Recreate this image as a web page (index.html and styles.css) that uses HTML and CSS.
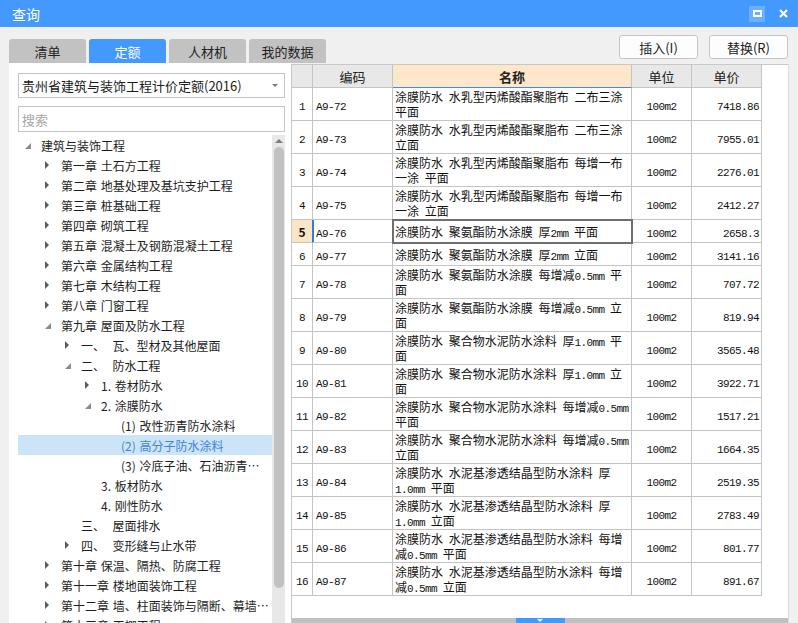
FILE: index.html
```html
<!DOCTYPE html>
<html lang="zh-CN">
<head>
<meta charset="utf-8">
<title>查询</title>
<link rel="stylesheet" href="styles.css">
</head>
<body>
<div class="titlebar">
  <span class="title">查询</span>
  <div class="win-btns">
    <span class="btn-max"><span class="max-box"></span></span>
    <svg class="btn-close" width="9" height="9" viewBox="0 0 9 9"><path d="M1 1L8 8M8 1L1 8" stroke="#fff" stroke-width="2.2"/></svg>
  </div>
</div>

<div class="toolbar">
  <div class="tabs">
    <div class="tab">清单</div>
    <div class="tab active">定额</div>
    <div class="tab">人材机</div>
    <div class="tab">我的数据</div>
  </div>
  <div class="actions">
    <button class="btn">插入(I)</button>
    <button class="btn">替换(R)</button>
  </div>
</div>

<div class="content">
  <div class="left">
    <div class="combo"><span class="combo-text">贵州省建筑与装饰工程计价定额(2016)</span><span class="combo-arrow"></span></div>
    <div class="search">搜索</div>
    <div class="tree">
      <div class="tree-list">
        <div class="node l0"><span class="tw"><i class="exp"></i></span><span class="label">建筑与装饰工程</span></div>
        <div class="node l1"><span class="tw"><i class="col"></i></span><span class="label">第一章 土石方工程</span></div>
        <div class="node l1"><span class="tw"><i class="col"></i></span><span class="label">第二章 地基处理及基坑支护工程</span></div>
        <div class="node l1"><span class="tw"><i class="col"></i></span><span class="label">第三章 桩基础工程</span></div>
        <div class="node l1"><span class="tw"><i class="col"></i></span><span class="label">第四章 砌筑工程</span></div>
        <div class="node l1"><span class="tw"><i class="col"></i></span><span class="label">第五章 混凝土及钢筋混凝土工程</span></div>
        <div class="node l1"><span class="tw"><i class="col"></i></span><span class="label">第六章 金属结构工程</span></div>
        <div class="node l1"><span class="tw"><i class="col"></i></span><span class="label">第七章 木结构工程</span></div>
        <div class="node l1"><span class="tw"><i class="col"></i></span><span class="label">第八章 门窗工程</span></div>
        <div class="node l1"><span class="tw"><i class="exp"></i></span><span class="label">第九章 屋面及防水工程</span></div>
        <div class="node l2"><span class="tw"><i class="col"></i></span><span class="label">一、&nbsp; 瓦、型材及其他屋面</span></div>
        <div class="node l2"><span class="tw"><i class="exp"></i></span><span class="label">二、&nbsp; 防水工程</span></div>
        <div class="node l3"><span class="tw"><i class="col"></i></span><span class="label">1. 卷材防水</span></div>
        <div class="node l3"><span class="tw"><i class="exp"></i></span><span class="label">2. 涂膜防水</span></div>
        <div class="node l4"><span class="tw"></span><span class="label">(1) 改性沥青防水涂料</span></div>
        <div class="node l4 sel"><span class="tw"></span><span class="label">(2) 高分子防水涂料</span></div>
        <div class="node l4"><span class="tw"></span><span class="label">(3) 冷底子油、石油沥青防水涂料</span></div>
        <div class="node l3"><span class="tw"></span><span class="label">3. 板材防水</span></div>
        <div class="node l3"><span class="tw"></span><span class="label">4. 刚性防水</span></div>
        <div class="node l2"><span class="tw"></span><span class="label">三、&nbsp; 屋面排水</span></div>
        <div class="node l2"><span class="tw"><i class="col"></i></span><span class="label">四、&nbsp; 变形缝与止水带</span></div>
        <div class="node l1"><span class="tw"><i class="col"></i></span><span class="label">第十章 保温、隔热、防腐工程</span></div>
        <div class="node l1"><span class="tw"><i class="col"></i></span><span class="label">第十一章 楼地面装饰工程</span></div>
        <div class="node l1"><span class="tw"><i class="col"></i></span><span class="label">第十二章 墙、柱面装饰与隔断、幕墙工程</span></div>
        <div class="node l1"><span class="tw"><i class="col"></i></span><span class="label">第十三章 天棚工程</span></div>
      </div>
      <div class="vscroll">
        <span class="up"></span>
        <span class="thumb"></span>
      </div>
    </div>
  </div>

  <div class="right">
    <div class="grid-wrap">
      <table class="grid">
        <colgroup>
          <col class="c-no"><col class="c-code"><col class="c-name"><col class="c-unit"><col class="c-price">
        </colgroup>
        <thead>
          <tr><th class="hd"></th><th class="hd">编码</th><th class="hd hd-name">名称</th><th class="hd">单位</th><th class="hd">单价</th></tr>
        </thead>
        <tbody>
          <tr class="two"><td class="no"><span class="n">1</span></td><td class="code"><span class="n">A9-72</span></td><td class="name">涂膜防水 水乳型丙烯酸酯聚脂布 二布三涂<br>平面</td><td class="unit"><span class="n">100m2</span></td><td class="price"><span class="n">7418.86</span></td></tr>
          <tr class="two"><td class="no"><span class="n">2</span></td><td class="code"><span class="n">A9-73</span></td><td class="name">涂膜防水 水乳型丙烯酸酯聚脂布 二布三涂<br>立面</td><td class="unit"><span class="n">100m2</span></td><td class="price"><span class="n">7955.01</span></td></tr>
          <tr class="two"><td class="no"><span class="n">3</span></td><td class="code"><span class="n">A9-74</span></td><td class="name">涂膜防水 水乳型丙烯酸酯聚脂布 每增一布<br>一涂 平面</td><td class="unit"><span class="n">100m2</span></td><td class="price"><span class="n">2276.01</span></td></tr>
          <tr class="two"><td class="no"><span class="n">4</span></td><td class="code"><span class="n">A9-75</span></td><td class="name">涂膜防水 水乳型丙烯酸酯聚脂布 每增一布<br>一涂 立面</td><td class="unit"><span class="n">100m2</span></td><td class="price"><span class="n">2412.27</span></td></tr>
          <tr class="one cur"><td class="no"><b>5</b></td><td class="code"><span class="n">A9-76</span></td><td class="name selcell">涂膜防水 聚氨酯防水涂膜 厚<span class="n">2mm</span> 平面</td><td class="unit"><span class="n">100m2</span></td><td class="price"><span class="n">2658.3</span></td></tr>
          <tr class="one"><td class="no"><span class="n">6</span></td><td class="code"><span class="n">A9-77</span></td><td class="name">涂膜防水 聚氨酯防水涂膜 厚<span class="n">2mm</span> 立面</td><td class="unit"><span class="n">100m2</span></td><td class="price"><span class="n">3141.16</span></td></tr>
          <tr class="two"><td class="no"><span class="n">7</span></td><td class="code"><span class="n">A9-78</span></td><td class="name">涂膜防水 聚氨酯防水涂膜 每增减<span class="n">0.5mm</span> 平<br>面</td><td class="unit"><span class="n">100m2</span></td><td class="price"><span class="n">707.72</span></td></tr>
          <tr class="two"><td class="no"><span class="n">8</span></td><td class="code"><span class="n">A9-79</span></td><td class="name">涂膜防水 聚氨酯防水涂膜 每增减<span class="n">0.5mm</span> 立<br>面</td><td class="unit"><span class="n">100m2</span></td><td class="price"><span class="n">819.94</span></td></tr>
          <tr class="two"><td class="no"><span class="n">9</span></td><td class="code"><span class="n">A9-80</span></td><td class="name">涂膜防水 聚合物水泥防水涂料 厚<span class="n">1.0mm</span> 平<br>面</td><td class="unit"><span class="n">100m2</span></td><td class="price"><span class="n">3565.48</span></td></tr>
          <tr class="two"><td class="no"><span class="n">10</span></td><td class="code"><span class="n">A9-81</span></td><td class="name">涂膜防水 聚合物水泥防水涂料 厚<span class="n">1.0mm</span> 立<br>面</td><td class="unit"><span class="n">100m2</span></td><td class="price"><span class="n">3922.71</span></td></tr>
          <tr class="two"><td class="no"><span class="n">11</span></td><td class="code"><span class="n">A9-82</span></td><td class="name">涂膜防水 聚合物水泥防水涂料 每增减<span class="n">0.5mm</span><br>平面</td><td class="unit"><span class="n">100m2</span></td><td class="price"><span class="n">1517.21</span></td></tr>
          <tr class="two"><td class="no"><span class="n">12</span></td><td class="code"><span class="n">A9-83</span></td><td class="name">涂膜防水 聚合物水泥防水涂料 每增减<span class="n">0.5mm</span><br>立面</td><td class="unit"><span class="n">100m2</span></td><td class="price"><span class="n">1664.35</span></td></tr>
          <tr class="two"><td class="no"><span class="n">13</span></td><td class="code"><span class="n">A9-84</span></td><td class="name">涂膜防水 水泥基渗透结晶型防水涂料 厚<br><span class="n">1.0mm</span> 平面</td><td class="unit"><span class="n">100m2</span></td><td class="price"><span class="n">2519.35</span></td></tr>
          <tr class="two"><td class="no"><span class="n">14</span></td><td class="code"><span class="n">A9-85</span></td><td class="name">涂膜防水 水泥基渗透结晶型防水涂料 厚<br><span class="n">1.0mm</span> 立面</td><td class="unit"><span class="n">100m2</span></td><td class="price"><span class="n">2783.49</span></td></tr>
          <tr class="two"><td class="no"><span class="n">15</span></td><td class="code"><span class="n">A9-86</span></td><td class="name">涂膜防水 水泥基渗透结晶型防水涂料 每增<br>减<span class="n">0.5mm</span> 平面</td><td class="unit"><span class="n">100m2</span></td><td class="price"><span class="n">801.77</span></td></tr>
          <tr class="two"><td class="no"><span class="n">16</span></td><td class="code"><span class="n">A9-87</span></td><td class="name">涂膜防水 水泥基渗透结晶型防水涂料 每增<br>减<span class="n">0.5mm</span> 立面</td><td class="unit"><span class="n">100m2</span></td><td class="price"><span class="n">891.67</span></td></tr>
        </tbody>
      </table>
    </div>
    <div class="hbar"><span class="handle"><i class="down"></i></span></div>
  </div>
</div>
</body>
</html>
```

FILE: styles.css
```css
* { box-sizing: border-box; }

body {
  margin: 0;
  width: 798px;
  height: 623px;
  overflow: hidden;
  background: #f0f0f0;
  font-family: "Noto Sans CJK SC", "Microsoft YaHei", sans-serif;
  font-size: 12px;
  color: #1f1f1f;
}

/* title bar */
.titlebar {
  height: 27px;
  background: #4499ff;
  color: #fff;
  font-size: 14px;
  display: flex;
  align-items: center;
  padding: 0 10px 0 12px;
}
.titlebar .title { flex: 1; }
.win-btns { display: flex; align-items: center; gap: 14px; }
.btn-max {
  width: 16px;
  height: 16px;
  background: #6caeff;
  display: flex;
  align-items: center;
  justify-content: center;
}
.max-box {
  width: 9px;
  height: 7px;
  border: 2px solid #fff;
}
.btn-close { display: block; }

/* toolbar */
.toolbar {
  height: 36px;
  display: flex;
  justify-content: space-between;
  align-items: flex-start;
  padding: 0 10px 0 9px;
}
.tabs { display: flex; gap: 3px; margin-top: 12px; }
.tab {
  width: 77px;
  height: 24px;
  background: #c2c2c2;
  border-radius: 3px 3px 0 0;
  display: flex;
  align-items: center;
  justify-content: center;
  font-size: 13px;
  color: #222;
}
.tab.active { background: #4499ff; color: #fff; }
.actions { display: flex; gap: 11px; margin-top: 8px; }
.btn {
  width: 79px;
  height: 24px;
  background: #fdfdfd;
  border: 1px solid #c6c6c6;
  border-radius: 3px;
  font-family: inherit;
  font-size: 13px;
  color: #222;
  padding: 0;
}

/* content */
.content {
  height: 560px;
  display: flex;
  padding: 0 9px;
}
.left {
  width: 282px;
  background: #fff;
  display: flex;
  flex-direction: column;
  padding-left: 9px;
}
.combo {
  margin-top: 10px;
  width: 267px;
  height: 25px;
  border: 1px solid #c4c4c4;
  display: flex;
  align-items: center;
  padding-left: 3px;
  font-size: 13px;
  color: #1a1a1a;
}
.combo-text { flex: 1; }
.combo-arrow {
  width: 0; height: 0;
  border-left: 3px solid transparent;
  border-right: 3px solid transparent;
  border-top: 3px solid #7a7a7a;
  margin-right: 6px;
}
.search {
  margin-top: 8px;
  width: 267px;
  height: 26px;
  border: 1px solid #c4c4c4;
  padding-left: 3px;
  display: flex;
  align-items: center;
  font-size: 13px;
  color: #a6a6a6;
}
.tree {
  margin-top: 3px;
  flex: 1;
  display: flex;
  width: 267px;
  overflow: hidden;
}
.tree-list { width: 254px; overflow: hidden; }
.node {
  height: 20px;
  display: flex;
  align-items: center;
  white-space: nowrap;
  padding-right: 2px;
}
.node.l0 { padding-left: 7px; }
.node.l1 { padding-left: 27px; }
.node.l2 { padding-left: 47px; }
.node.l3 { padding-left: 67px; }
.node.l4 { padding-left: 87px; }
.tw { width: 16px; flex: none; display: flex; align-items: center; }
.tw .col {
  width: 0; height: 0;
  border-left: 4px solid #5c5c5c;
  border-top: 4px solid transparent;
  border-bottom: 4px solid transparent;
}
.tw .exp {
  width: 0; height: 0;
  border-right: 6px solid #8a8a8a;
  border-top: 6px solid transparent;
  margin-top: 2px;
}
.label {
  overflow: hidden;
  text-overflow: ellipsis;
  white-space: nowrap;
  color: #1e1e1e;
  word-spacing: 1px;
}
.node.sel { background: #cce4f7; }
.node.sel .label { color: #3f84d6; }

.vscroll {
  width: 13px;
  background: #e8e8e8;
  display: flex;
  flex-direction: column;
  align-items: center;
}
.vscroll .up {
  margin-top: 4px;
  width: 0; height: 0;
  border-left: 4px solid transparent;
  border-right: 4px solid transparent;
  border-bottom: 4px solid #7d7d7d;
}
.vscroll .thumb {
  margin-top: 4px;
  width: 10px;
  height: 441px;
  background: #c1c1c1;
  border-radius: 5px;
}

/* right grid panel */
.right {
  width: 498px;
  margin-top: 1px;
  background: #fff;
  border-left: 1px solid #c8c8c8;
  border-top: 1px solid #c8c8c8;
  border-right: 1px solid #dedede;
  display: flex;
  flex-direction: column;
}
.grid-wrap { flex: 1; overflow: hidden; }
.grid {
  border-collapse: separate;
  border-spacing: 0;
  table-layout: fixed;
  width: 470px;
}
.c-no { width: 21px; }
.c-code { width: 80px; }
.c-name { width: 239px; }
.c-unit { width: 60px; }
.c-price { width: 70px; }

.grid th, .grid td {
  border-right: 1px solid #c4c4c4;
  border-bottom: 1px solid #c4c4c4;
  padding: 0 2px;
  white-space: nowrap;
  overflow: hidden;
}
.grid th {
  height: 23px;
  background: #e8e8e8;
  font-weight: normal;
  font-size: 13px;
  color: #222;
  text-align: center;
}
.grid th.hd-name {
  background: #fde6c9;
  font-weight: bold;
  border-bottom-color: #3a8cf0;
}
.grid td {
  font-size: 12px;
  line-height: 15px;
  color: #111;
  vertical-align: middle;
  word-spacing: 3px;
}
.grid tr.one td { height: 23px; }
.grid tr.two td { height: 33px; }

.n {
  font-family: "Liberation Mono", monospace;
  font-size: 11px;
  line-height: 10px;
  letter-spacing: -0.6px;
  word-spacing: 0;
}
.grid td.no { text-align: center; padding: 0; }
.grid td.code { padding-left: 3px; }
.grid td.name { padding-left: 2px; }
.grid td.unit { text-align: center; }
.grid td.price { text-align: right; padding-right: 2px; }

.grid tr.cur td.no {
  background: #fde4c6;
  border-right-color: #2b7de9;
  font-size: 12px;
}
.grid tr.cur td.code { box-shadow: inset 1px 0 0 #2b7de9; }
.grid td.selcell { outline: 2px solid #6e6e6e; outline-offset: -1px; }

.hbar {
  height: 5px;
  background: #c0c0c0;
  display: flex;
  justify-content: center;
}
.handle {
  width: 49px;
  height: 5px;
  background: #4499ff;
  display: flex;
  justify-content: center;
  align-items: flex-start;
  padding-top: 1px;
}
.handle .down {
  width: 0; height: 0;
  border-left: 3px solid transparent;
  border-right: 3px solid transparent;
  border-top: 3px solid #fff;
}
```
